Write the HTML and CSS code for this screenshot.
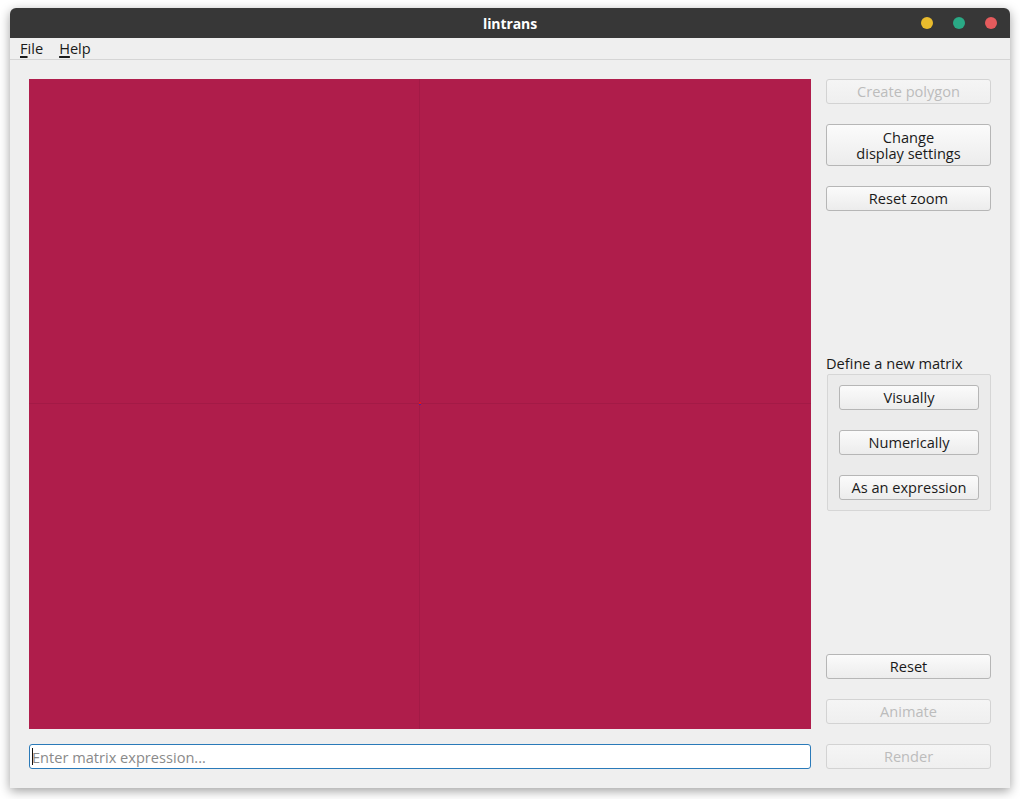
FILE: index.html
```html
<!DOCTYPE html>
<html>
<head>
<meta charset="utf-8">
<title>lintrans</title>
<link rel="stylesheet" href="styles.css">
</head>
<body>
<div class="window">
  <div class="titlebar">
    <div></div>
    <div class="title">lintrans</div>
    <div class="controls">
      <span class="dot dot-min"></span>
      <span class="dot dot-max"></span>
      <span class="dot dot-close"></span>
    </div>
  </div>
  <div class="menubar">
    <span class="menu-item"><u>F</u>ile</span>
    <span class="menu-item"><u>H</u>elp</span>
  </div>
  <div class="main">
    <div class="left">
      <div class="canvas">
        <svg class="plane" width="782" height="650" viewBox="0 0 782 650">
          <rect x="390" y="0" width="1" height="650" fill="#a31a46"/>
          <rect x="0" y="324" width="782" height="1" fill="#a31a46"/>
          <rect x="390" y="323" width="2" height="2" fill="#e3141e"/>
          <rect x="390" y="325" width="2" height="1" fill="#4a20a8"/>
        </svg>
      </div>
      <div class="input-wrap">
        <span class="caret"></span>
        <input class="expr" type="text" placeholder="Enter matrix expression...">
      </div>
    </div>
    <div class="right">
      <div class="btn-group">
        <button class="btn" disabled>Create polygon</button>
        <button class="btn btn-tall"><span class="line">Change</span><span class="line">display settings</span></button>
        <button class="btn">Reset zoom</button>
      </div>
      <div class="define">
        <div class="define-label">Define a new matrix</div>
        <div class="groupbox">
          <button class="btn">Visually</button>
          <button class="btn">Numerically</button>
          <button class="btn">As an expression</button>
        </div>
      </div>
      <div class="btn-group">
        <button class="btn">Reset</button>
        <button class="btn" disabled>Animate</button>
        <button class="btn" disabled>Render</button>
      </div>
    </div>
  </div>
</div>
</body>
</html>
```
FILE: styles.css
```css
html, body {
  margin: 0;
  padding: 0;
}
body {
  width: 1020px;
  height: 799px;
  overflow: hidden;
  background: #ffffff;
  padding: 8px 10px 0;
  box-sizing: border-box;
  font-family: "Open Sans", "Noto Sans", sans-serif;
  font-size: 14.6px;
  color: #1a1a1a;
}
.window {
  width: 1000px;
  height: 780px;
  background: #efefef;
  border-radius: 6px 6px 0 0;
  box-shadow: 0 3px 11px rgba(0, 0, 0, 0.38);
  display: flex;
  flex-direction: column;
  overflow: hidden;
}
.titlebar {
  height: 30px;
  background: #373737;
  display: grid;
  grid-template-columns: 1fr auto 1fr;
  align-items: center;
  flex: none;
}
.title {
  color: #ffffff;
  font-weight: 700;
  font-size: 14px;
  letter-spacing: -0.1px;
}
.controls {
  display: flex;
  justify-content: flex-end;
  gap: 20px;
  padding-right: 13px;
}
.dot {
  width: 12px;
  height: 12px;
  border-radius: 50%;
  display: block;
}
.dot-min { background: #e9bb2d; }
.dot-max { background: #2aa985; }
.dot-close { background: #e55b5d; }
.menubar {
  height: 21px;
  border-bottom: 1px solid #d5d5d5;
  display: flex;
  align-items: center;
  gap: 16px;
  padding-left: 10px;
  flex: none;
  line-height: 21px;
}
.menu-item {
  color: #1a1a1a;
}
.menu-item u {
  text-decoration-thickness: 2px;
  text-underline-offset: 2px;
}
.main {
  flex: 1;
  display: flex;
  gap: 15px;
  padding: 19px;
  min-height: 0;
}
.left {
  width: 782px;
  display: flex;
  flex-direction: column;
  gap: 15px;
}
.canvas {
  flex: 1;
  background: #af1d4b;
  overflow: hidden;
}
.plane {
  display: block;
}
.input-wrap {
  position: relative;
  height: 25px;
}
.expr {
  width: 100%;
  height: 25px;
  box-sizing: border-box;
  border: 1px solid #2a7ab9;
  border-radius: 3px;
  background: #ffffff;
  padding: 0 2px;
  font-family: inherit;
  font-size: 14.6px;
  color: #1a1a1a;
  outline: none;
  margin: 0;
}
.expr::placeholder {
  color: #8a8a8a;
}
.caret {
  position: absolute;
  left: 3px;
  top: 4px;
  width: 1px;
  height: 17px;
  background: #111;
  z-index: 1;
}
.right {
  width: 165px;
  display: flex;
  flex-direction: column;
  justify-content: space-between;
}
.btn-group {
  display: flex;
  flex-direction: column;
  gap: 20px;
}
.btn {
  height: 25px;
  margin: 0;
  padding: 0;
  border: 1px solid #b6b6b6;
  border-radius: 3px;
  background: linear-gradient(#fbfbfb, #ececec);
  font-family: inherit;
  font-size: 14.6px;
  color: #1a1a1a;
  line-height: 17px;
}
.btn-tall {
  height: 42px;
  display: flex;
  flex-direction: column;
  align-items: center;
  justify-content: center;
}
.line {
  display: block;
  height: 16px;
  line-height: 16px;
}
.btn:disabled {
  border-color: #d3d3d3;
  background: linear-gradient(#f5f5f5, #efefef);
  color: #bcbcbc;
}
.define {
  display: flex;
  flex-direction: column;
  gap: 2px;
}
.define-label {
  height: 18px;
  line-height: 18px;
}
.groupbox {
  margin-left: 1px;
  border: 1px solid #d6d6d6;
  border-radius: 2px;
  background: #ebebeb;
  padding: 10px 11px;
  display: flex;
  flex-direction: column;
  gap: 20px;
}
```
